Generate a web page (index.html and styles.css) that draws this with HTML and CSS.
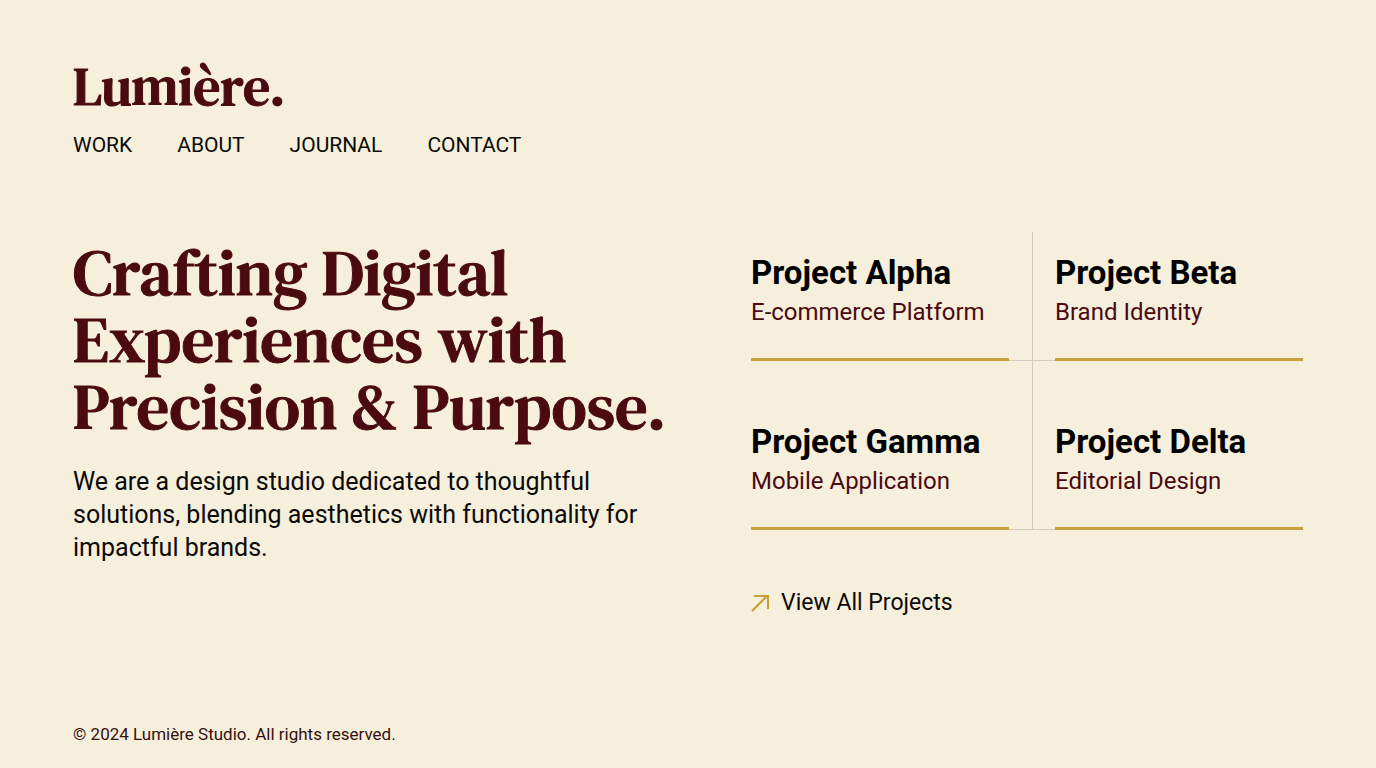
FILE: index.html
```html
<!DOCTYPE html>
<html lang="en">
<head>
    <meta charset="UTF-8">
    <meta name="viewport" content="width=device-width, initial-scale=1.0">
    <title>Lumière Studio</title>
    <link rel="stylesheet" href="styles.css">
</head>
<body>
    <header class="header">
        <a href="#" class="logo">Lumière.</a>
        <nav class="nav">
            <a href="#work">WORK</a>
            <a href="#about">ABOUT</a>
            <a href="#journal">JOURNAL</a>
            <a href="#contact">CONTACT</a>
        </nav>
    </header>

    <main class="main">
        <section class="hero">
            <h1>Crafting Digital<br>Experiences with<br>Precision &amp; Purpose.</h1>
            <p>We are a design studio dedicated to thoughtful solutions, blending aesthetics with functionality for impactful brands.</p>
        </section>

        <section class="work" id="work">
            <div class="projects">
                <article class="project">
                    <h2>Project Alpha</h2>
                    <p>E-commerce Platform</p>
                </article>
                <article class="project">
                    <h2>Project Beta</h2>
                    <p>Brand Identity</p>
                </article>
                <article class="project">
                    <h2>Project Gamma</h2>
                    <p>Mobile Application</p>
                </article>
                <article class="project">
                    <h2>Project Delta</h2>
                    <p>Editorial Design</p>
                </article>
            </div>
            <a href="#all" class="view-all">
                <svg width="18" height="18" viewBox="0 0 18 18" fill="none" stroke="currentColor" stroke-width="2">
                    <path d="M1 17L16 2M3 2H17V15"/>
                </svg>
                View All Projects
            </a>
        </section>
    </main>

    <footer class="footer">© 2024 Lumière Studio. All rights reserved.</footer>
</body>
</html>
```

FILE: styles.css
```css
* {
    box-sizing: border-box;
}

body {
    margin: 0;
    min-height: 100vh;
    padding: 56px 73px 23px;
    display: flex;
    flex-direction: column;
    background-color: #f6efdc;
    color: #0b0a08;
    font-family: Roboto, "Liberation Sans", sans-serif;
}

h1, h2, p {
    margin: 0;
}

a {
    color: inherit;
    text-decoration: none;
}

.logo,
.hero h1 {
    color: #4a0a10;
    font-family: "DM Serif Text", "DM Serif Display", "Liberation Serif", serif;
    font-weight: normal;
    -webkit-text-stroke: 1px #4a0a10;
}

.logo {
    display: block;
    font-size: 54px;
    line-height: 60px;
}

.nav {
    display: flex;
    flex-wrap: wrap;
    gap: 12px 45px;
    margin-top: 16px;
    font-size: 21px;
    line-height: 26px;
}

.main {
    display: grid;
    grid-template-columns: 626fr 552fr;
    column-gap: 52px;
    margin-top: 74px;
}

.hero h1 {
    margin-top: 7px;
    font-size: 65px;
    line-height: 67px;
    white-space: nowrap;
}

.hero p {
    max-width: 600px;
    margin-top: 25px;
    font-size: 25px;
    line-height: 33px;
}

.projects {
    position: relative;
    display: grid;
    grid-template-columns: 258fr 248fr;
    gap: 40px 46px;
}

/* thin line between the two columns */
.projects::before {
    content: "";
    position: absolute;
    top: 0;
    bottom: 0;
    left: calc((100% - 46px) * 258 / 506 + 23px);
    width: 1px;
    background-color: #d3ccba;
}

.project {
    position: relative;
    padding: 21px 0 30px;
    border-bottom: 3px solid #c5a03f;
}

.project:nth-child(odd)::after {
    content: "";
    position: absolute;
    left: 100%;
    bottom: -3px;
    width: 46px;
    height: 1px;
    background-color: #d3ccba;
}

.project h2 {
    color: #000;
    font-size: 33px;
    line-height: 40px;
    white-space: nowrap;
}

.project p {
    margin-top: 3px;
    color: #4a0a10;
    font-size: 24px;
    line-height: 32px;
}

.view-all {
    display: inline-flex;
    align-items: center;
    gap: 12px;
    margin-top: 59px;
    font-size: 23px;
    line-height: 28px;
}

.view-all svg {
    color: #c9a030;
}

.footer {
    margin-top: auto;
    color: #35100f;
    font-size: 17px;
    line-height: 22px;
}

@media (max-width: 1100px) {
    .main {
        grid-template-columns: 1fr;
        row-gap: 48px;
    }

    .hero h1 {
        white-space: normal;
    }

    .footer {
        margin-top: 48px;
    }
}
```
